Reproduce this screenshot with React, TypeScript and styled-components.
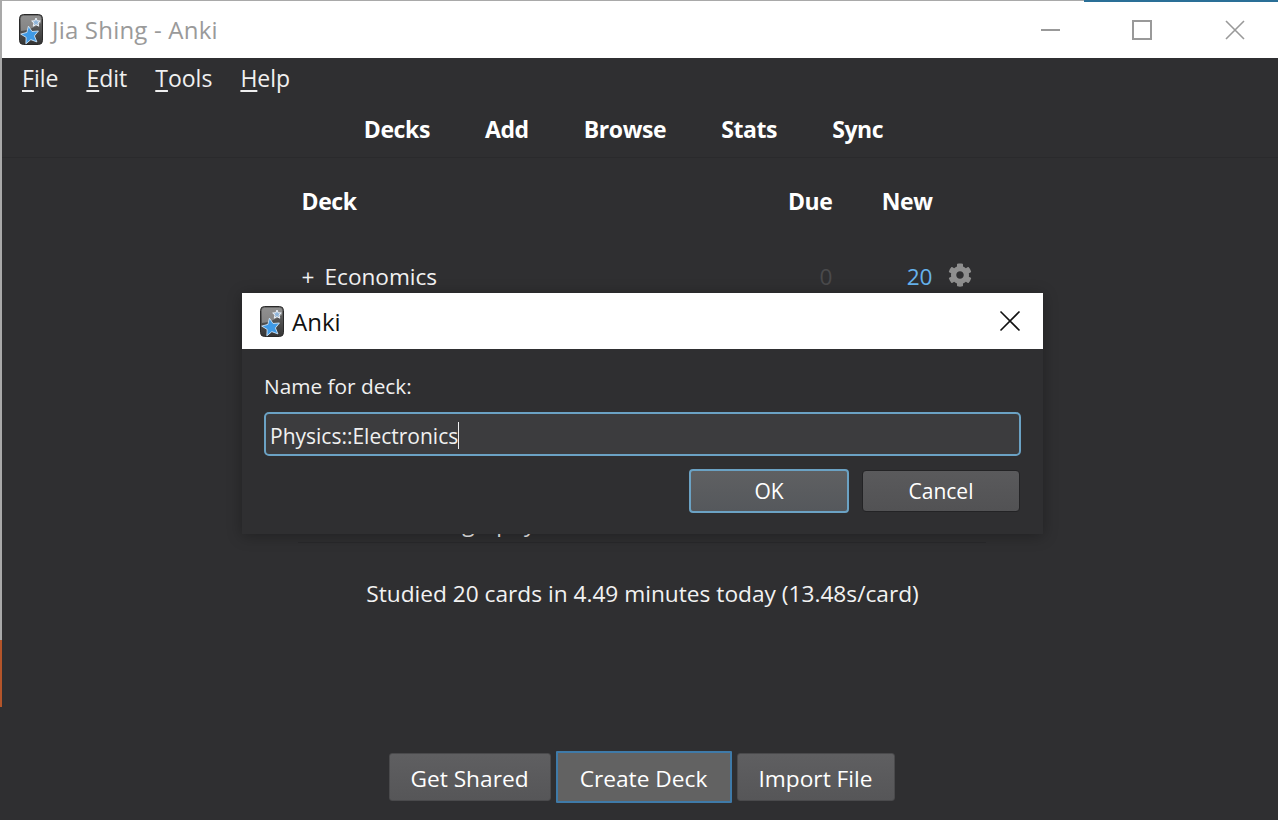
import React from 'react';
import styled, { createGlobalStyle } from 'styled-components';
import { FaCog } from 'react-icons/fa';

const FONT = '"Open Sans", "Noto Sans", sans-serif';

const Global = createGlobalStyle`
  html, body { margin: 0; padding: 0; background: #2f2f31; overflow: hidden; }
  * { box-sizing: border-box; }
`;

// left edge: 2px of the desktop showing behind the window
const Win = styled.div`
  width: 1278px;
  height: 820px;
  display: flex;
  flex-direction: column;
  position: relative;
  overflow: hidden;
  padding-left: 2px;
  background:
    linear-gradient(to bottom, #a9a9a9 0 640px, #b4552a 640px 707px, #2f2f31 707px) no-repeat 0 0 / 2px 100%,
    #2f2f31;
  font-family: ${FONT};
  color: #f2f2f2;
`;

const TitleBar = styled.div`
  height: 58px;
  background: #fff;
  border-top: 1px solid #a9a9a9;
  display: flex;
  align-items: center;
  padding-left: 17px;
  font-size: 24px;
  letter-spacing: 0.2px;
  color: #9a9a9a;
  gap: 9px;
`;

const TitleText = styled.span`
  flex: 1;
`;

const WinBtn = styled.div`
  width: 93px;
  display: flex;
  justify-content: center;
  align-items: center;
  svg { display: block; }
`;

const WinButtons = styled.div`
  display: flex;
  margin-right: -3px;
`;

const MenuBar = styled.div`
  height: 41px;
  display: flex;
  align-items: center;
  padding: 0 0 2px 20px;
  gap: 28px;
  font-size: 23px;
  color: #f0f0f0;
`;

const MenuItem = styled.span`
  u { text-underline-offset: 3px; text-decoration-thickness: 2px; }
`;

const Toolbar = styled.div`
  height: 59px;
  display: flex;
  justify-content: center;
  align-items: center;
  gap: 55px;
  padding: 2px 33px 0 0;
  font-size: 23px;
  font-weight: 700;
  letter-spacing: -0.4px;
  color: #fff;
  border-bottom: 1px solid #2a2a2c;
`;

const Main = styled.div`
  flex: 1;
  display: flex;
  flex-direction: column;
  align-items: center;
`;

const Table = styled.div`
  width: 688px;
  margin-left: 3px;
  padding-top: 24px;
`;

const Row = styled.div`
  display: grid;
  grid-template-columns: 1fr 100px 100px 53px;
  align-items: center;
  height: 38px;
  padding-left: 4px;
`;

const HeadRow = styled(Row)`
  font-size: 23px;
  font-weight: 700;
  letter-spacing: -0.4px;
  color: #fff;
  margin-bottom: 37px;
`;

const Num = styled.span<{ $color?: string }>`
  text-align: right;
  color: ${p => p.$color || 'inherit'};
`;

const DeckRow = styled(Row)`
  font-size: 22.6px;
  color: #f2f2f2;
`;

const Expander = styled.span`
  display: inline-block;
  width: 23px;
`;

const GearCell = styled.span`
  display: flex;
  padding-left: 15px;
  margin-top: -3px;
  color: #8f8f8f;
`;

const HiddenRow = styled(DeckRow)`
  margin-top: 206px;
  height: 42px;
  padding-left: 122px;
  padding-top: 3px;
  border-bottom: 1px solid #29292b;
`;

const Studied = styled.div`
  margin: 35px 0 0 5px;
  font-size: 22.7px;
  color: #f2f2f2;
`;

const BottomBar = styled.div`
  display: flex;
  justify-content: center;
  gap: 5px;
  position: absolute;
  left: 0;
  right: 0;
  bottom: 17px;
  padding-left: 5px;
  align-items: center;
`;

const Btn = styled.div<{ $w: number; $focus?: boolean }>`
  width: ${p => p.$w}px;
  height: ${p => (p.$focus ? 52 : 48)}px;
  display: flex;
  align-items: center;
  justify-content: center;
  padding-top: 2px;
  font-size: 22.7px;
  color: #fff;
  border-radius: ${p => (p.$focus ? 1 : 3)}px;
  background: ${p => (p.$focus ? '#626262' : 'linear-gradient(#5f5f61, #565658)')};
  border: ${p => (p.$focus ? '2px solid #3f7aa8' : '1px solid #4a4a4c')};
`;

const Dialog = styled.div`
  position: absolute;
  left: 242px;
  top: 293px;
  width: 801px;
  height: 241px;
  background: #2f2f31;
  box-shadow: 0 2px 14px rgba(0, 0, 0, 0.3);
  display: flex;
  flex-direction: column;
`;

const DialogTitle = styled.div`
  height: 56px;
  background: #fff;
  display: flex;
  align-items: center;
  padding-left: 18px;
  gap: 8px;
  font-size: 24px;
  color: #111;
`;

const DialogTitleText = styled.span`
  flex: 1;
`;

const CloseBtn = styled.div`
  display: flex;
  margin-right: 22px;
`;

const DialogBody = styled.div`
  flex: 1;
  padding: 23px 22px 0;
  display: flex;
  flex-direction: column;
`;

const Label = styled.div`
  font-size: 20.8px;
  line-height: 28px;
  color: #f0f0f0;
`;

const Input = styled.div`
  margin-top: 12px;
  height: 44px;
  background: #3c3c3e;
  border: 2px solid #6ba2c4;
  border-radius: 5px;
  padding: 3px 0 0 4px;
  display: flex;
  align-items: center;
  font-size: 21px;
  color: #f0f0f0;
`;

const Caret = styled.span`
  width: 1px;
  height: 27px;
  background: #f0f0f0;
`;

const DialogButtons = styled.div`
  margin-top: 13px;
  display: flex;
  justify-content: flex-end;
  align-items: center;
  gap: 13px;
  padding-right: 1px;
`;

const DialogBtn = styled.div<{ $focus?: boolean }>`
  width: ${p => (p.$focus ? 160 : 158)}px;
  height: ${p => (p.$focus ? 44 : 42)}px;
  display: flex;
  align-items: center;
  justify-content: center;
  font-size: 21px;
  color: #fff;
  border-radius: 4px;
  background: ${p => (p.$focus ? 'linear-gradient(#5f6062, #55585c)' : 'linear-gradient(#5a5a5c, #525254)')};
  border: ${p => (p.$focus ? '2px solid #6ba2c4' : '1px solid #232325')};
`;

const TopAccent = styled.div`
  position: absolute;
  right: 0;
  top: 0;
  width: 194px;
  height: 2px;
  background: #2a6f97;
`;

// little Anki app icon: dark rounded tile with two stars
const AnkiIcon = ({ id }: { id: string }) => (
  <svg width={24} height={31} viewBox="0 0 24 31" style={{ flex: 'none' }}>
    <defs>
      <linearGradient id={id} x1="0" y1="0" x2="0" y2="1">
        <stop offset="0" stopColor="#6e6e6e" />
        <stop offset="1" stopColor="#343434" />
      </linearGradient>
    </defs>
    <rect x="0.5" y="0.5" width="23" height="30" rx="4" fill={`url(#${id})`} stroke="#2a2a2a" />
    <path d="M2 17 Q12 16 22 9 V4 Q22 2 20 2 H4 Q2 2 2 4 Z" fill="#a8a8a8" opacity="0.6" />
    <path d="M17 4 L18.2 6.8 L21.3 7 L19 9.1 L19.8 12.2 L17 10.6 L14.2 12.2 L15 9.1 L12.7 7 L15.8 6.8 Z" fill="#8fb4d8" stroke="#eef3f8" strokeWidth="1" />
    <g transform="rotate(-10 11 21)">
      <path d="M11 12 L13.6 17.9 L20 18.5 L15.2 22.7 L16.6 29 L11 25.7 L5.4 29 L6.8 22.7 L2 18.5 L8.4 17.9 Z" fill="#3f9ae6" stroke="#d5e9fa" strokeWidth="0.8" />
    </g>
  </svg>
);

export default function App() {
  return (
    <Win>
      <Global />
      <TopAccent />
      <TitleBar>
        <AnkiIcon id="tile-main" />
        <TitleText>Jia Shing - Anki</TitleText>
        <WinButtons>
          <WinBtn>
            <svg width="22" height="22" viewBox="0 0 22 22"><path d="M3 11 H22" stroke="#999" strokeWidth="2" /></svg>
          </WinBtn>
          <WinBtn>
            <svg width="22" height="22" viewBox="0 0 22 22"><rect x="2" y="2" width="18" height="18" fill="none" stroke="#999" strokeWidth="2" /></svg>
          </WinBtn>
          <WinBtn>
            <svg width="22" height="22" viewBox="0 0 22 22"><path d="M2 2 L20 20 M20 2 L2 20" stroke="#999" strokeWidth="1.6" /></svg>
          </WinBtn>
        </WinButtons>
      </TitleBar>
      <MenuBar>
        <MenuItem><u>F</u>ile</MenuItem>
        <MenuItem><u>E</u>dit</MenuItem>
        <MenuItem><u>T</u>ools</MenuItem>
        <MenuItem><u>H</u>elp</MenuItem>
      </MenuBar>
      <Toolbar>
        <span>Decks</span>
        <span>Add</span>
        <span>Browse</span>
        <span>Stats</span>
        <span>Sync</span>
      </Toolbar>
      <Main>
        <Table>
          <HeadRow>
            <span>Deck</span>
            <Num>Due</Num>
            <Num>New</Num>
            <span />
          </HeadRow>
          <DeckRow>
            <span><Expander>+</Expander>Economics</span>
            <Num $color="#4a4a4c">0</Num>
            <Num $color="#66b3ee">20</Num>
            <GearCell><FaCog size={24} /></GearCell>
          </DeckRow>
          <HiddenRow>
            <span>Geography</span>
          </HiddenRow>
        </Table>
        <Studied>Studied 20 cards in 4.49 minutes today (13.48s/card)</Studied>
      </Main>
      <BottomBar>
        <Btn $w={162}>Get Shared</Btn>
        <Btn $w={176} $focus>Create Deck</Btn>
        <Btn $w={158}>Import File</Btn>
      </BottomBar>
      <Dialog>
        <DialogTitle>
          <AnkiIcon id="tile-dialog" />
          <DialogTitleText>Anki</DialogTitleText>
          <CloseBtn>
            <svg width="22" height="22" viewBox="0 0 22 22"><path d="M1.5 1.5 L20.5 20.5 M20.5 1.5 L1.5 20.5" stroke="#111" strokeWidth="1.6" /></svg>
          </CloseBtn>
        </DialogTitle>
        <DialogBody>
          <Label>Name for deck:</Label>
          <Input>Physics::Electronics<Caret /></Input>
          <DialogButtons>
            <DialogBtn $focus>OK</DialogBtn>
            <DialogBtn>Cancel</DialogBtn>
          </DialogButtons>
        </DialogBody>
      </Dialog>
    </Win>
  );
}
